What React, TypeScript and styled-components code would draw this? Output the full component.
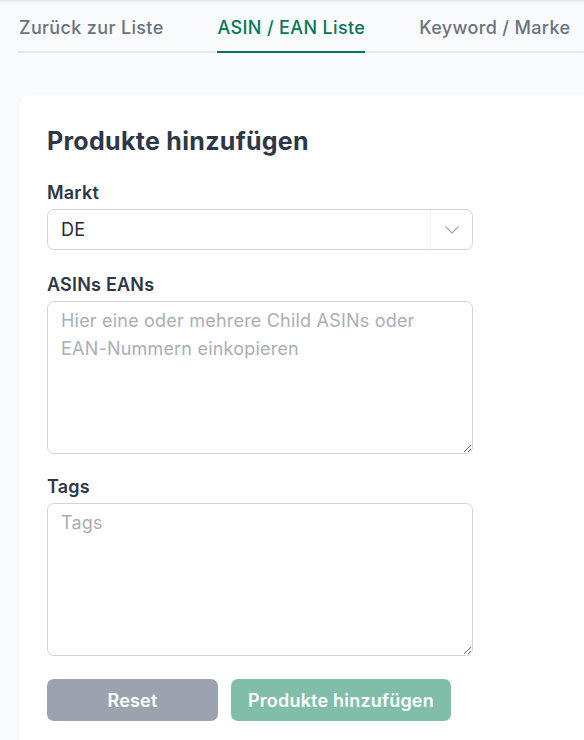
import React, { useState } from 'react';
import styled, { createGlobalStyle } from 'styled-components';

const GlobalStyle = createGlobalStyle`
  html, body {
    margin: 0;
    padding: 0;
    background: #f9fafb;
    font-family: Inter, "Noto Sans", sans-serif;
    color: #2d3748;
  }
  * { box-sizing: border-box; }
`;

const Page = styled.div`
  min-height: 740px;
  overflow: hidden;
  box-shadow: inset 0 3px 3px -2px rgba(0, 0, 0, 0.12);
`;

const TabBar = styled.nav`
  display: flex;
  gap: 53px;
  margin: 0 0 0 18px;
  padding-top: 15px;
  border-bottom: 2px solid #e5e7eb;
  white-space: nowrap;
`;

const Tab = styled.button<{ $active?: boolean }>`
  background: none;
  border: none;
  padding: 0 0 10px 1px;
  margin-bottom: -2px;
  font-family: inherit;
  font-size: 18px;
  font-weight: 500;
  line-height: 26px;
  letter-spacing: 0.35px;
  color: ${(p) => (p.$active ? '#047857' : '#6b7280')};
  border-bottom: 2px solid ${(p) => (p.$active ? '#047857' : 'transparent')};
  cursor: pointer;
`;

const Card = styled.section`
  margin: 42px -40px 0 19px;
  background: #fff;
  border-radius: 10px;
  box-shadow: 0 1px 3px rgba(0, 0, 0, 0.06);
  padding: 29px 28px 40px 28px;
`;

const Heading = styled.h2`
  margin: 0 0 24px;
  font-size: 25px;
  font-weight: 700;
  line-height: 34px;
  letter-spacing: 0.3px;
  color: #2d3748;
`;

const Form = styled.form`
  display: flex;
  flex-direction: column;
  width: 426px;
`;

const Field = styled.div<{ $spacing: number }>`
  display: flex;
  flex-direction: column;
  gap: 5px;
  margin-bottom: ${(p) => p.$spacing}px;
`;

const Label = styled.label`
  font-size: 18px;
  font-weight: 600;
  line-height: 22px;
  letter-spacing: 0.2px;
  color: #2d3748;
`;

const SelectBox = styled.div`
  display: flex;
  align-items: stretch;
  height: 41px;
  border: 1px solid #d1d5db;
  border-radius: 7px;
  background: #fff;
`;

const SelectValue = styled.div`
  flex: 1;
  display: flex;
  align-items: center;
  padding-left: 13px;
  font-size: 18px;
  letter-spacing: 0.2px;
  color: #1f2937;
`;

const SelectToggle = styled.div`
  width: 42px;
  display: flex;
  align-items: center;
  justify-content: center;
  border-left: 1px solid #f1f2f4;
`;

const TextArea = styled.textarea`
  display: block;
  height: 153px;
  resize: vertical;
  border: 1px solid #d1d5db;
  border-radius: 7px;
  padding: 5px 13px;
  font-family: inherit;
  font-size: 18px;
  line-height: 28px;
  letter-spacing: 0.2px;
  color: #1f2937;
  outline: none;

  &::placeholder {
    color: #a9aeb7;
  }
`;

const Actions = styled.div`
  display: flex;
  gap: 13px;
  margin-top: 1px;
`;

const Button = styled.button<{ $variant: 'reset' | 'submit' }>`
  height: 42px;
  border: none;
  border-radius: 7px;
  padding: 0 16px;
  font-family: inherit;
  font-size: 18px;
  font-weight: 600;
  letter-spacing: 0.2px;
  color: #fff;
  background: ${(p) => (p.$variant === 'reset' ? '#9ca3af' : '#81bea9')};
  width: ${(p) => (p.$variant === 'reset' ? '171px' : '220px')};
  cursor: pointer;
`;

const tabs = ['Zurück zur Liste', 'ASIN / EAN Liste', 'Keyword / Marke'];

export default function App() {
  const [asins, setAsins] = useState('');
  const [tags, setTags] = useState('');

  return (
    <Page>
      <GlobalStyle />
      <TabBar>
        {tabs.map((t) => (
          <Tab key={t} $active={t === 'ASIN / EAN Liste'}>
            {t}
          </Tab>
        ))}
      </TabBar>
      <Card>
        <Heading>Produkte hinzufügen</Heading>
        <Form onSubmit={(e) => e.preventDefault()}>
          <Field $spacing={24}>
            <Label>Markt</Label>
            <SelectBox>
              <SelectValue>DE</SelectValue>
              <SelectToggle>
                <svg width="14" height="8" viewBox="0 0 14 8" fill="none">
                  <path d="M1 1l6 6 6-6" stroke="#a1a6b0" strokeWidth="1.2" strokeLinecap="round" strokeLinejoin="round" />
                </svg>
              </SelectToggle>
            </SelectBox>
          </Field>
          <Field $spacing={22}>
            <Label>ASINs EANs</Label>
            <TextArea
              value={asins}
              onChange={(e) => setAsins(e.target.value)}
              placeholder="Hier eine oder mehrere Child ASINs oder EAN-Nummern einkopieren"
            />
          </Field>
          <Field $spacing={22}>
            <Label>Tags</Label>
            <TextArea value={tags} onChange={(e) => setTags(e.target.value)} placeholder="Tags" />
          </Field>
          <Actions>
            <Button type="reset" $variant="reset">Reset</Button>
            <Button type="submit" $variant="submit">Produkte hinzufügen</Button>
          </Actions>
        </Form>
      </Card>
    </Page>
  );
}
